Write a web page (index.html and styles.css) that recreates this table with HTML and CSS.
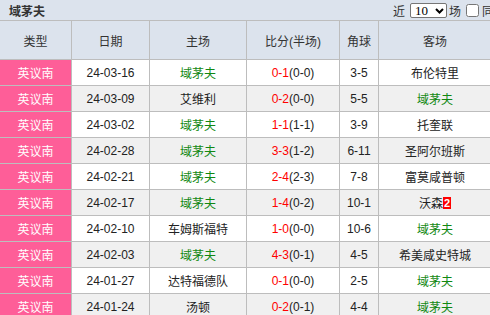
FILE: index.html
```html
<!DOCTYPE html>
<html lang="zh-CN">
<head>
<meta charset="utf-8">
<title>域茅夫</title>
<link rel="stylesheet" href="styles.css">
</head>
<body>
<div class="page">
  <div class="titlebar">
    <span class="team">域茅夫</span>
    <div class="tools">
      <span class="lbl">近</span>
      <span class="sel">
        <select class="count"><option>10</option><option>20</option></select>
        <svg class="chev" width="9" height="6" viewBox="0 0 9 6"><path d="M1 1 L4.5 4.5 L8 1" fill="none" stroke="#000" stroke-width="2"/></svg>
      </span>
      <span class="lbl">场</span>
      <input type="checkbox" class="chk">
      <span class="lbl">同</span>
    </div>
  </div>
  <table class="grid">
    <colgroup>
      <col class="c-type"><col class="c-date"><col class="c-home"><col class="c-score"><col class="c-corner"><col class="c-away">
    </colgroup>
    <thead>
      <tr><th>类型</th><th>日期</th><th>主场</th><th>比分(半场)</th><th>角球</th><th>客场</th></tr>
    </thead>
    <tbody>
      <tr><td class="lg">英议南</td><td>24-03-16</td><td class="me">域茅夫</td><td><span class="sc">0-1</span>(0-0)</td><td>3-5</td><td>布伦特里</td></tr>
      <tr class="alt"><td class="lg">英议南</td><td>24-03-09</td><td>艾维利</td><td><span class="sc">0-2</span>(0-0)</td><td>5-5</td><td class="me">域茅夫</td></tr>
      <tr><td class="lg">英议南</td><td>24-03-02</td><td class="me">域茅夫</td><td><span class="sc">1-1</span>(1-1)</td><td>3-9</td><td>托奎联</td></tr>
      <tr class="alt"><td class="lg">英议南</td><td>24-02-28</td><td class="me">域茅夫</td><td><span class="sc">3-3</span>(1-2)</td><td>6-11</td><td>圣阿尔班斯</td></tr>
      <tr><td class="lg">英议南</td><td>24-02-21</td><td class="me">域茅夫</td><td><span class="sc">2-4</span>(2-3)</td><td>7-8</td><td>富莫咸普顿</td></tr>
      <tr class="alt"><td class="lg">英议南</td><td>24-02-17</td><td class="me">域茅夫</td><td><span class="sc">1-4</span>(0-2)</td><td>10-1</td><td>沃森<span class="card">2</span></td></tr>
      <tr><td class="lg">英议南</td><td>24-02-10</td><td>车姆斯福特</td><td><span class="sc">1-0</span>(0-0)</td><td>10-6</td><td class="me">域茅夫</td></tr>
      <tr class="alt"><td class="lg">英议南</td><td>24-02-03</td><td class="me">域茅夫</td><td><span class="sc">4-3</span>(0-1)</td><td>4-5</td><td>希美咸史特城</td></tr>
      <tr><td class="lg">英议南</td><td>24-01-27</td><td>达特福德队</td><td><span class="sc">0-1</span>(0-0)</td><td>2-5</td><td class="me">域茅夫</td></tr>
      <tr class="alt"><td class="lg">英议南</td><td>24-01-24</td><td>汤顿</td><td><span class="sc">0-2</span>(0-1)</td><td>4-4</td><td class="me">域茅夫</td></tr>
    </tbody>
  </table>
</div>
</body>
</html>
```
FILE: styles.css
```css
html, body {
  margin: 0;
  padding: 0;
  background: #ffffff;
  overflow: hidden;
}
body {
  font-family: "Liberation Sans", "Noto Sans CJK SC", sans-serif;
  font-size: 12px;
  color: #222;
}
.page {
  width: 500px;
}
.titlebar {
  height: 20px;
  background: #dce3ed;
  display: flex;
  align-items: center;
  white-space: nowrap;
}
.team {
  padding-left: 9px;
  font-weight: bold;
  color: #333;
}
.tools {
  margin-left: auto;
  margin-right: 6px;
  display: flex;
  align-items: center;
  color: #333;
}
.sel {
  position: relative;
  display: inline-flex;
  margin: 0 2px 0 5px;
}
.count {
  appearance: none;
  -webkit-appearance: none;
  width: 37px;
  height: 15px;
  box-sizing: border-box;
  border: 1px solid #767676;
  border-radius: 2px;
  background: #fff;
  font-family: "Liberation Serif", serif;
  font-size: 13px;
  line-height: 13px;
  padding: 0 0 0 4px;
  color: #000;
  margin: 0;
}
.chev {
  position: absolute;
  right: 3px;
  top: 5px;
  pointer-events: none;
}
.chk {
  width: 13px;
  height: 13px;
  margin: 0 3px 0 5px;
}
.grid {
  border-collapse: collapse;
  table-layout: fixed;
  margin-left: -1px;
  width: 492px;
}
.c-type { width: 72px; }
.c-date { width: 78px; }
.c-home { width: 97px; }
.c-score { width: 93px; }
.c-corner { width: 39px; }
.c-away { width: 113px; }
.grid th, .grid td {
  border: 1px solid #bdbdbd;
  text-align: center;
  padding: 0;
  white-space: nowrap;
  overflow: hidden;
}
.grid th {
  height: 38px;
  background: #dce3ed;
  font-weight: normal;
  color: #333;
}
.grid td {
  height: 25px;
  background: #fff;
}
.grid tr.alt td {
  background: #f0f0f0;
}
.grid td.lg, .grid tr.alt td.lg {
  background: #fe5e98;
  color: #fff;
}
.me {
  color: #118811;
}
.sc {
  color: #f00;
}
.card {
  display: inline-block;
  background: #f00;
  color: #fff;
  font-weight: bold;
  font-size: 11px;
  line-height: 12px;
  padding: 0 1px;
  vertical-align: 1px;
}
```
